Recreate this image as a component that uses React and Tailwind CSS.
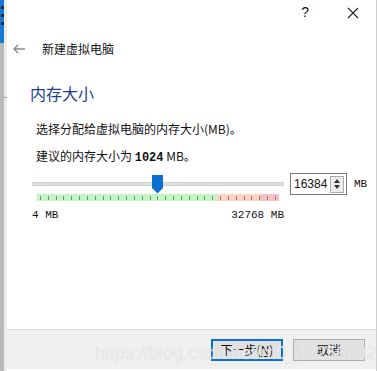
import React from "react";

const cjk = { fontFamily: '"Noto Sans CJK SC", "Liberation Sans", sans-serif' };
const mono = { fontFamily: '"Liberation Mono", "Noto Sans CJK SC", monospace' };

// tick marks under the slider
const ticks = Array.from({ length: 31 }, (_, i) => i);

const App = () => {
  return (
    <div className="w-[377px] h-[371px] flex bg-white overflow-hidden relative" style={cjk}>
      {/* left strip: window behind the dialog */}
      <div className="w-[4px] shrink-0 flex flex-col">
        <div className="h-[43px] bg-[#1979d2] flex flex-col items-center gap-[5px] pt-[6px]">
          <span className="w-[3px] h-[3px] bg-[#1b2b44]" />
          <span className="w-[3px] h-[3px] bg-[#1b2b44]" />
          <span className="w-[3px] h-[3px] bg-[#1b2b44]" />
        </div>
        <div className="flex-1 bg-[#b9b9b9]" />
      </div>
      <div className="w-[3px] shrink-0 bg-[#ececec] flex flex-col">
        <div className="h-[97px]" />
        <div className="h-[1px] bg-[#9a9a9a]" />
      </div>

      {/* dialog */}
      <div className="flex-1 min-w-0 flex flex-col border-r border-[#cfcfcf]">
        {/* title bar */}
        <div className="h-[25px] flex items-center justify-end text-[#111]">
          <span className="text-[14px] mr-[38px]" style={{ fontFamily: '"Liberation Sans", sans-serif' }}>?</span>
          <svg width="12" height="12" viewBox="0 0 12 12" className="mr-[17px]">
            <path d="M1 1 L11 11 M11 1 L1 11" stroke="#222" strokeWidth="1.1" />
          </svg>
        </div>

        {/* back row */}
        <div className="h-[50px] flex items-center pl-[6px] -mt-[1px]">
          <svg width="13" height="10" viewBox="0 0 13 10">
            <path d="M1 5 H12 M5 1 L1 5 L5 9" stroke="#8a8a8a" strokeWidth="1.4" fill="none" />
          </svg>
          <span className="ml-[16px] text-[12px] text-[#111]">新建虚拟电脑</span>
        </div>

        {/* content */}
        <div className="flex-1 flex flex-col pl-[23px]">
          <div className="text-[16px] text-[#1b3f8c] leading-[20px] mt-[9px]">内存大小</div>
          <div className="pl-[6px] text-[12px] text-[#111] leading-[16px] mt-[18px]">
            选择分配给虚拟电脑的内存大小(MB)。
          </div>
          <div className="pl-[6px] text-[12px] text-[#111] leading-[16px] mt-[11px]">
            建议的内存大小为 <span className="font-bold" style={mono}>1024</span> MB。
          </div>

          {/* slider row */}
          <div className="flex items-start mt-[9px] pl-[2px]">
            <div className="w-[252px] shrink-0 flex flex-col">
              <div className="relative h-[19px] pt-[7px]">
                <div className="w-[252px] h-[4px] bg-[#e2e2e2] border border-[#d0d0d0]" />
                <svg width="11" height="19" viewBox="0 0 11 19" className="absolute left-[120px] top-0">
                  <path d="M0 0 H11 V13 L5.5 18.5 L0 13 Z" fill="#0a6fd0" />
                </svg>
              </div>
              <div className="mx-[5px] h-[7px] flex relative">
                <div className="w-[180px] bg-[#c6f5c6]" />
                <div className="w-[43px] bg-[#fdd3c5]" />
                <div className="flex-1 bg-[#f9c1c6]" />
                <div className="absolute inset-0 flex justify-between px-[3px]">
                  {ticks.map((i) => (
                    <span key={i} className="w-[1px] h-[4px] mt-[2px] bg-[#7a8a7a]" />
                  ))}
                </div>
              </div>
              <div className="flex justify-between text-[11px] text-[#111] mt-[7px] leading-[14px]" style={mono}>
                <span>4 MB</span>
                <span>32768 MB</span>
              </div>
            </div>

            {/* spin box */}
            <div className="ml-[6px] mt-[-2px] w-[57px] h-[22px] shrink-0 border border-[#7a7a7a] flex items-center">
              <span className="ml-[3px] flex-1 text-[12px] text-[#111]" style={{ fontFamily: '"Liberation Sans", sans-serif' }}>16384</span>
              <div className="w-[14px] h-[17px] mr-[2px] border border-[#adadad] bg-[#ececec] flex flex-col items-center justify-center gap-[2px]">
                <svg width="6" height="4" viewBox="0 0 6 4"><path d="M0 4 L3 0 L6 4 Z" fill="#333" /></svg>
                <svg width="6" height="4" viewBox="0 0 6 4"><path d="M0 0 L3 4 L6 0 Z" fill="#333" /></svg>
              </div>
            </div>
            <span className="ml-[7px] mt-[1px] text-[11px] text-[#111]" style={mono}>MB</span>
          </div>
        </div>

        {/* footer */}
        <div className="h-[40px] bg-[#f0f0f0] border-t border-[#dcdcdc] flex items-center justify-end pr-[11px] gap-[10px] mb-[2px]">
          <button className="w-[72px] h-[22px] border-2 border-[#0a6fd0] bg-[#e1e1e1] text-[12px] text-[#111] flex items-center justify-center">
            下一步(<span className="underline">N</span>)
          </button>
          <button className="w-[72px] h-[22px] border border-[#adadad] bg-[#e1e1e1] text-[12px] text-[#111] flex items-center justify-center">
            取消
          </button>
        </div>
      </div>

      {/* watermark over the footer */}
      <div
        className="absolute left-[95px] top-[340px] text-[18px] text-white/50 pointer-events-none whitespace-nowrap"
        style={{ fontFamily: '"Liberation Sans", sans-serif', textShadow: "0 0 1px #cfcfcf" }}
      >
        https://blog.csdn.net/m0_42256692
      </div>
    </div>
  );
};

export default App;
